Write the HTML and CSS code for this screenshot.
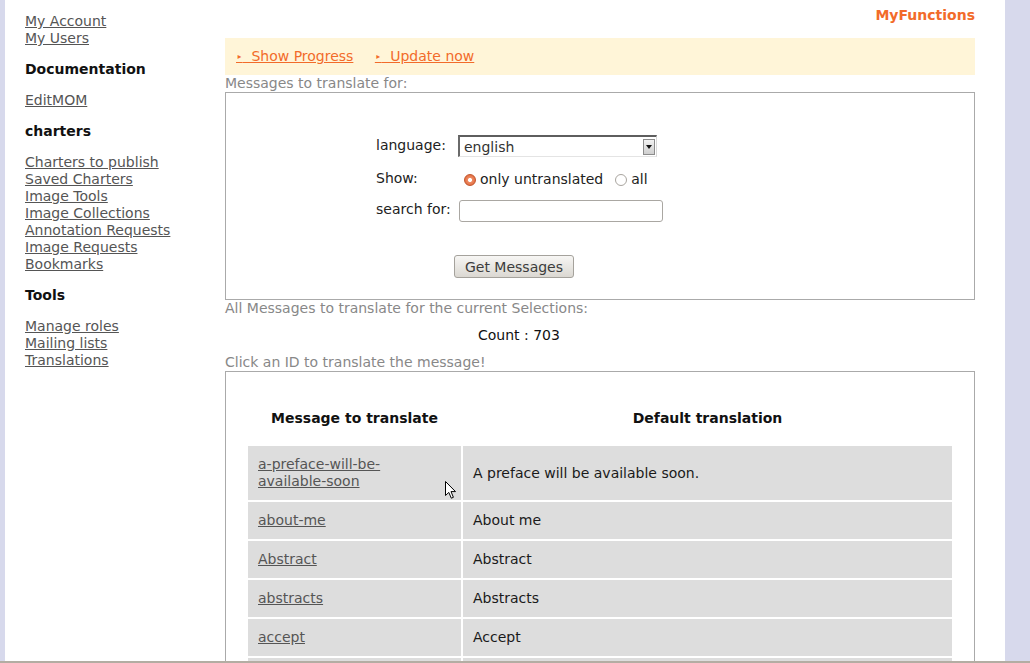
FILE: index.html
```html
<!DOCTYPE html>
<html>
<head>
<meta charset="utf-8">
<title>Translations</title>
<link rel="stylesheet" href="styles.css">
</head>
<body>
<div class="window">
  <div class="page">
    <nav class="sidebar">
      <a href="#">My Account</a>
      <a href="#">My Users</a>
      <h3>Documentation</h3>
      <a href="#">EditMOM</a>
      <h3>charters</h3>
      <a href="#">Charters to publish</a>
      <a href="#">Saved Charters</a>
      <a href="#">Image Tools</a>
      <a href="#">Image Collections</a>
      <a href="#">Annotation Requests</a>
      <a href="#">Image Requests</a>
      <a href="#">Bookmarks</a>
      <h3 class="tools">Tools</h3>
      <a href="#">Manage roles</a>
      <a href="#">Mailing lists</a>
      <a href="#">Translations</a>
    </nav>
    <main class="main">
      <div class="title">MyFunctions</div>
      <div class="bar">
        <a href="#"><span class="tri">‣</span>&nbsp;&nbsp;Show Progress</a>
        <a href="#"><span class="tri">‣</span>&nbsp;&nbsp;Update now</a>
      </div>
      <div class="label">Messages to translate for:</div>
      <div class="box formbox">
        <div class="form">
          <span class="flabel lang-label">language:</span>
          <div class="select">
            <select><option>english</option></select>
            <span class="arrow"><svg width="6" height="4" viewBox="0 0 6 4"><path d="M0 0H6L3 4Z" fill="#111"/></svg></span>
          </div>
          <span class="flabel">Show:</span>
          <div class="radios">
            <label><input type="radio" name="show" checked>only untranslated</label>
            <label><input type="radio" name="show">all</label>
          </div>
          <span class="flabel search-label">search for:</span>
          <input class="search" type="text">
        </div>
        <button class="btn" type="button">Get Messages</button>
      </div>
      <div class="label">All Messages to translate for the current Selections:</div>
      <div class="count">Count : 703</div>
      <div class="label">Click an ID to translate the message!</div>
      <div class="box tablebox">
        <table class="msgs">
          <thead>
            <tr><th class="c1">Message to translate</th><th>Default translation</th></tr>
          </thead>
          <tbody>
            <tr><td class="c1"><a href="#">a-preface-will-be-<br>available-soon</a></td><td>A preface will be available soon.</td></tr>
            <tr><td class="c1"><a href="#">about-me</a></td><td>About me</td></tr>
            <tr><td class="c1"><a href="#">Abstract</a></td><td>Abstract</td></tr>
            <tr><td class="c1"><a href="#">abstracts</a></td><td>Abstracts</td></tr>
            <tr><td class="c1"><a href="#">accept</a></td><td>Accept</td></tr>
            <tr class="hidden-row"><td class="c1">&nbsp;</td><td>&nbsp;</td></tr>
            <tr class="hidden-row"><td class="c1">&nbsp;</td><td>&nbsp;</td></tr>
          </tbody>
        </table>
      </div>
    </main>
    <svg class="cursor" width="13" height="20" viewBox="0 0 13 20"><path d="M1.5 1.5V15.5L4.8 12.4L7.3 18.2L9.4 17.3L7 11.6H11.5Z" fill="#fff" stroke="#000" stroke-width="1" stroke-linejoin="miter"/></svg>
  </div>
</div>
</body>
</html>
```
FILE: styles.css
```css
body {
  margin: 0;
  font-family: "DejaVu Sans", sans-serif;
  font-size: 14px;
  line-height: 17px;
  color: #1a1a1a;
}
.window {
  height: 661px;
  overflow: hidden;
  border-bottom: 2px solid #b3ada3;
  background: #d7d9ec;
  display: flex;
  padding: 0 25px 0 5px;
}
.page {
  flex: 1;
  background: #fff;
  display: flex;
  position: relative;
}
.sidebar {
  width: 200px;
  padding: 13px 0 0 20px;
}
.sidebar a {
  display: block;
  color: #555;
}
.sidebar h3 {
  margin: 14px 0 14px;
  font-size: 14px;
  line-height: 17px;
  color: #111;
}
.sidebar h3.tools {
  margin-top: 14px;
  margin-bottom: 14px;
}
.main {
  width: 750px;
  padding-top: 7px;
}
.title {
  text-align: right;
  font-weight: bold;
  color: #f26b2a;
  margin-bottom: 14px;
}
.bar {
  background: #fff5d8;
  padding: 10px 11px;
  height: 17px;
  line-height: 17px;
}
.bar a {
  color: #f26b2a;
  margin-right: 17px;
}
.tri {
  font-size: 11px;
  line-height: 0;
}
.label {
  color: #888;
}
.box {
  border: 1px solid #aaa;
}
.formbox {
  padding: 42px 0 21px 150px;
}
.form {
  display: grid;
  grid-template-columns: 82px auto;
  grid-template-rows: 22px 21px 22px;
  row-gap: 11px;
  align-items: center;
}
.flabel {
  color: #222;
}
.lang-label {
  margin-top: -2px;
}
.search-label {
  margin-top: -3px;
}
.select {
  position: relative;
  width: 199px;
  height: 22px;
}
.select select {
  appearance: none;
  -webkit-appearance: none;
  box-sizing: border-box;
  width: 199px;
  height: 22px;
  margin: 0;
  padding: 0 0 0 4px;
  border-style: solid;
  border-width: 2px 1px 1px 2px;
  border-color: #5e5e5e #d8d8d8 #e4e4e4 #6a6a6a;
  background: #fff;
  font-family: "DejaVu Sans", sans-serif;
  font-size: 14px;
  color: #333;
  border-radius: 0;
}
.arrow {
  position: absolute;
  right: 2px;
  top: 4px;
  width: 10px;
  height: 14px;
  border: 1px solid #8c8c8c;
  background: linear-gradient(#f2f2f2, #cfcfcf);
  display: flex;
  align-items: center;
  justify-content: center;
  pointer-events: none;
}
.arrow svg {
  display: block;
}
.radios {
  display: flex;
  gap: 6px;
  color: #222;
  margin-top: 2px;
}
.radios label {
  display: flex;
  align-items: center;
}
.radios input {
  appearance: none;
  -webkit-appearance: none;
  width: 12px;
  height: 12px;
  margin: 0 4px 0 6px;
  border-radius: 50%;
  border: 1px solid #a9a59f;
  background: #fff;
  box-sizing: border-box;
}
.radios input:checked {
  border-color: #c2552c;
  background: radial-gradient(circle, #fff 0 1.6px, #ee8a62 2.4px, #dc5f30 100%);
}
.search {
  box-sizing: border-box;
  width: 204px;
  height: 22px;
  margin: 0 0 0 1px;
  border: 1px solid #aaa7a2;
  border-radius: 3px;
  background: #fff;
}
.btn {
  display: block;
  margin: 33px 0 0 78px;
  width: 120px;
  height: 23px;
  padding: 0;
  border: 1px solid #a5a29c;
  border-radius: 3px;
  background: linear-gradient(#f7f6f4, #dbd8d2);
  font-family: "DejaVu Sans", sans-serif;
  font-size: 14px;
  color: #3c3c3c;
}
.count {
  padding: 10px 0 10px 253px;
  color: #111;
}
.tablebox {
  padding: 20px 20px 0;
}
.msgs {
  width: 100%;
  border-collapse: separate;
  border-spacing: 2px;
  table-layout: fixed;
}
.msgs th {
  padding: 16px 10px 17px;
  font-weight: bold;
  color: #111;
  text-align: center;
}
.msgs th.c1 {
  width: 193px;
}
.msgs td {
  background: #ddd;
  padding: 10px;
  vertical-align: middle;
  color: #1a1a1a;
}
.msgs td a {
  color: #555;
}
.cursor {
  position: absolute;
  left: 439px;
  top: 480px;
}
```
